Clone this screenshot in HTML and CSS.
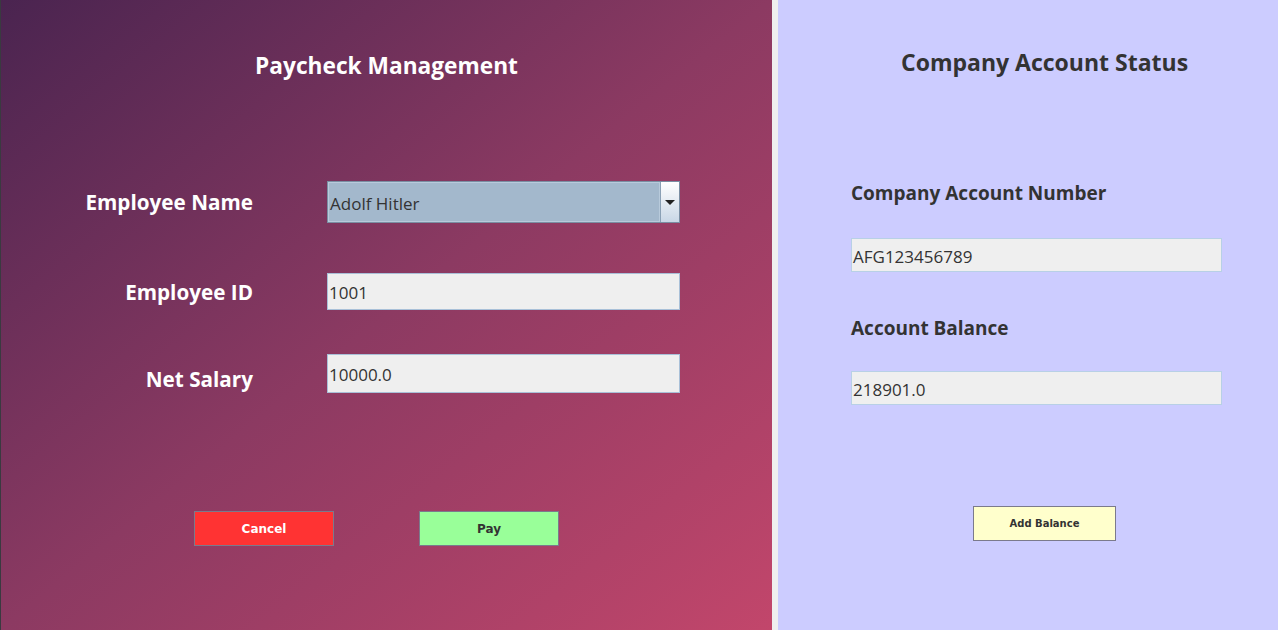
FILE: index.html
```html
<!DOCTYPE html>
<html>
<head>
<meta charset="utf-8">
<link rel="stylesheet" href="styles.css">
</head>
<body>
<div class="app">
  <section class="pay-panel">
    <h1 class="pay-title">Paycheck Management</h1>
    <div class="form-row row-name">
      <label class="row-label">Employee Name</label>
      <div class="combo">
        <span class="combo-text">Adolf Hitler</span>
        <span class="combo-btn"><span class="combo-arrow"></span></span>
      </div>
    </div>
    <div class="form-row row-id">
      <label class="row-label">Employee ID</label>
      <div class="field field-id">1001</div>
    </div>
    <div class="form-row row-salary">
      <label class="row-label label-salary">Net Salary</label>
      <div class="field field-salary">10000.0</div>
    </div>
    <div class="btn-row">
      <button class="btn btn-cancel">Cancel</button>
      <button class="btn btn-pay">Pay</button>
    </div>
  </section>
  <div class="divider"></div>
  <section class="acct-panel">
    <h2 class="acct-title">Company Account Status</h2>
    <div class="acct-label acct-label-num">Company Account Number</div>
    <div class="acct-field acct-field-num">AFG123456789</div>
    <div class="acct-label acct-label-bal">Account Balance</div>
    <div class="acct-field acct-field-bal">218901.0</div>
    <button class="btn btn-add">Add Balance</button>
  </section>
</div>
</body>
</html>
```
FILE: styles.css
```css
* { box-sizing: border-box; }
html, body { margin: 0; padding: 0; }
body {
  width: 1278px;
  height: 630px;
  overflow: hidden;
  font-family: "Open Sans", "Noto Sans", sans-serif;
  background: #f0f0f0;
}
.app {
  display: flex;
  width: 1278px;
  height: 630px;
}
.pay-panel {
  width: 772px;
  height: 630px;
  background: linear-gradient(to bottom right, #4a2450 0%, #8c3a62 50%, #c2466b 100%);
  border-left: 1px solid #3a3a40;
  display: flex;
  flex-direction: column;
}
.pay-title {
  margin: 0;
  padding-top: 50px;
  line-height: 32px;
  font-size: 22.7px;
  font-weight: 700;
  color: #ffffff;
  text-align: center;
}
.form-row {
  display: flex;
  align-items: center;
}
.row-name { margin-top: 99px; }
.row-id { margin-top: 50px; }
.row-salary { margin-top: 44px; }
.row-label {
  width: 252px;
  margin-right: 74px;
  text-align: right;
  font-size: 20.7px;
  font-weight: 700;
  color: #ffffff;
  line-height: 28px;
}
.label-salary { margin-top: 11px; }
.combo {
  width: 353px;
  height: 42px;
  display: flex;
  background: #a3b8cc;
  border: 1px solid #7a8ea3;
}
.combo-text {
  flex: 1;
  display: flex;
  align-items: center;
  padding-left: 1px;
  padding-top: 2px;
  font-size: 17px;
  color: #333333;
  border: 1px solid #b8cadb;
}
.combo-btn {
  width: 19px;
  display: flex;
  align-items: center;
  justify-content: center;
  background: linear-gradient(#ffffff, #c9d7e6);
  border-left: 1px solid #8aa0b5;
}
.combo-arrow {
  width: 0;
  height: 0;
  border-left: 5px solid transparent;
  border-right: 5px solid transparent;
  border-top: 5px solid #222222;
}
.field {
  width: 353px;
  display: flex;
  align-items: center;
  padding-left: 1px;
  padding-top: 2px;
  background: #efefef;
  border: 1px solid #a9c0d8;
  font-size: 17px;
  color: #333333;
}
.field-id { height: 37px; }
.field-salary { height: 39px; }
.btn-row {
  display: flex;
  margin-top: 118px;
  padding-left: 193px;
  gap: 85px;
}
.btn {
  width: 140px;
  height: 35px;
  margin: 0;
  padding: 0;
  border: 1px solid #7b7a8c;
  font-family: "DejaVu Sans", Verdana, sans-serif;
  font-weight: 700;
  font-size: 12px;
  color: #333333;
  cursor: pointer;
}
.btn-cancel { background: #ff3333; color: #ffffff; }
.btn-pay { background: #99ff99; }
.divider {
  width: 6px;
  height: 630px;
  background: #efefef;
}
.acct-panel {
  flex: 1;
  height: 630px;
  background: #ccccff;
  padding-left: 73px;
  display: flex;
  flex-direction: column;
  align-items: flex-start;
}
.acct-title {
  margin: 0;
  padding-top: 46px;
  padding-left: 50px;
  line-height: 32px;
  font-size: 23px;
  font-weight: 700;
  color: #333333;
}
.acct-label {
  line-height: 24px;
  font-size: 19px;
  font-weight: 700;
  color: #333333;
}
.acct-label-num { margin-top: 103px; }
.acct-label-bal { margin-top: 44px; }
.acct-field {
  width: 371px;
  height: 34px;
  display: flex;
  align-items: center;
  padding-left: 1px;
  padding-top: 2px;
  background: #efefef;
  border: 1px solid #b8d0e6;
  font-size: 17px;
  color: #333333;
}
.acct-field-num { margin-top: 33px; }
.acct-field-bal { margin-top: 31px; }
.btn-add {
  margin-top: 101px;
  margin-left: 122px;
  width: 143px;
  background: #ffffcc;
  font-size: 10px;
}
```
